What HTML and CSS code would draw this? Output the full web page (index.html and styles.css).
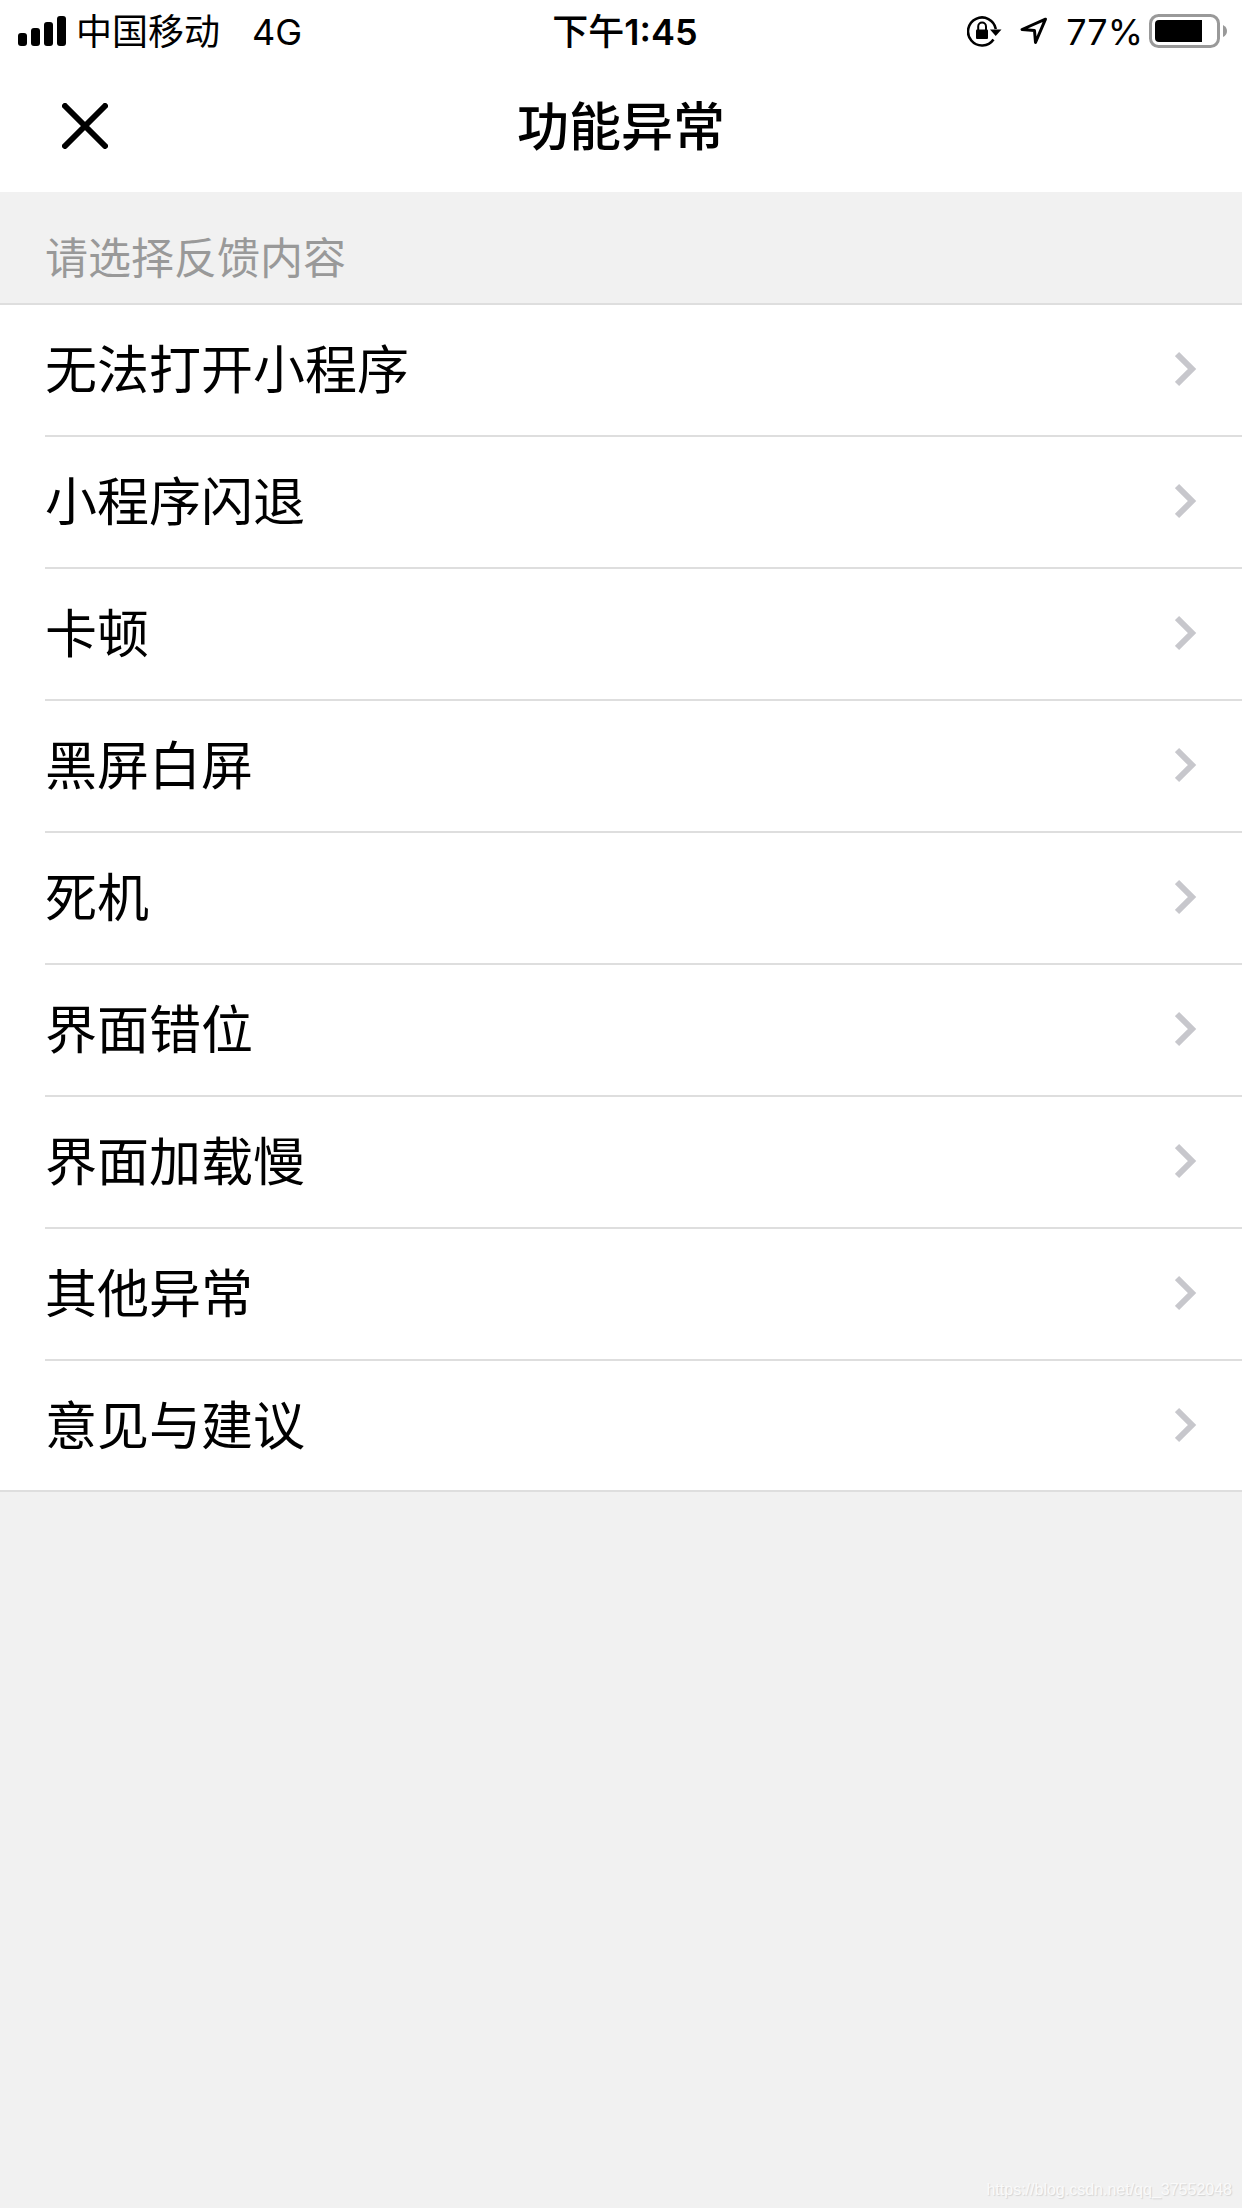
FILE: index.html
```html
<!DOCTYPE html>
<html lang="zh-CN">
<head>
<meta charset="utf-8">
<meta name="viewport" content="width=device-width, initial-scale=1">
<title>功能异常</title>
<link rel="stylesheet" href="styles.css">
</head>
<body>
<div class="status-bar">
  <div class="status-left">
    <svg class="signal" width="48" height="30" viewBox="0 0 48 30" aria-hidden="true"><rect x="0" y="17" width="9" height="13" rx="3"/><rect x="13" y="12" width="9" height="18" rx="3"/><rect x="26" y="6" width="9" height="24" rx="3"/><rect x="39" y="0" width="9" height="30" rx="3"/></svg>
    <span class="status-text">中国移动</span>
    <span class="status-text network">4G</span>
  </div>
  <div class="status-text status-time">下午<span class="digits">1:45</span></div>
  <div class="status-right">
    <svg class="rotation-lock" width="35" height="32" viewBox="0 0 35 32" aria-hidden="true">
      <path d="M26.500 24.500A14 14 0 1 1 28.800 14" fill="none" stroke="#000" stroke-width="2.600"/>
      <path d="M23 14.500h11.500L28.700 21z"/>
      <rect x="9" y="14.500" width="12" height="9.500" rx="1"/>
      <path d="M11.200 15v-3.500a3.900 3.900 0 0 1 7.800 0v3.500" fill="none" stroke="#000" stroke-width="2"/>
    </svg>
    <svg class="location" width="28" height="28" viewBox="0 0 28 28" aria-hidden="true"><path d="M25.500 2.200L2 12.500L14.500 13.500L15.500 25.500z" fill="none" stroke="#000" stroke-width="3" stroke-linejoin="round"/></svg>
    <span class="status-text">77%</span>
    <svg class="battery" width="78" height="34" viewBox="0 0 78 34" aria-hidden="true">
      <rect x="1.500" y="1.500" width="68" height="31" rx="8" fill="none" stroke="#999" stroke-width="3"/>
      <path d="M10 6H53V28H10Q6 28 6 24V10Q6 6 10 6z"/>
      <path d="M74 11Q78 13 78 17T74 23z" fill="#999"/>
    </svg>
  </div>
</div>
<header class="nav-bar">
  <button class="close" type="button" aria-label="关闭"><svg width="46" height="46" viewBox="0 0 46 46" aria-hidden="true"><path d="M3 3L43 43M43 3L3 43" stroke="#000" stroke-width="6" stroke-linecap="round"/></svg></button>
  <h1>功能异常</h1>
</header>
<main>
  <h2 class="section-label">请选择反馈内容</h2>
  <ul class="options">
    <li><a href="#open"><span>无法打开小程序</span><svg class="chevron" width="22" height="36" viewBox="0 0 22 36" aria-hidden="true"><path d="M2 3L17 18L2 33"/></svg></a></li>
    <li><a href="#crash"><span>小程序闪退</span><svg class="chevron" width="22" height="36" viewBox="0 0 22 36" aria-hidden="true"><path d="M2 3L17 18L2 33"/></svg></a></li>
    <li><a href="#lag"><span>卡顿</span><svg class="chevron" width="22" height="36" viewBox="0 0 22 36" aria-hidden="true"><path d="M2 3L17 18L2 33"/></svg></a></li>
    <li><a href="#blank"><span>黑屏白屏</span><svg class="chevron" width="22" height="36" viewBox="0 0 22 36" aria-hidden="true"><path d="M2 3L17 18L2 33"/></svg></a></li>
    <li><a href="#freeze"><span>死机</span><svg class="chevron" width="22" height="36" viewBox="0 0 22 36" aria-hidden="true"><path d="M2 3L17 18L2 33"/></svg></a></li>
    <li><a href="#layout"><span>界面错位</span><svg class="chevron" width="22" height="36" viewBox="0 0 22 36" aria-hidden="true"><path d="M2 3L17 18L2 33"/></svg></a></li>
    <li><a href="#slow"><span>界面加载慢</span><svg class="chevron" width="22" height="36" viewBox="0 0 22 36" aria-hidden="true"><path d="M2 3L17 18L2 33"/></svg></a></li>
    <li><a href="#other"><span>其他异常</span><svg class="chevron" width="22" height="36" viewBox="0 0 22 36" aria-hidden="true"><path d="M2 3L17 18L2 33"/></svg></a></li>
    <li><a href="#suggest"><span>意见与建议</span><svg class="chevron" width="22" height="36" viewBox="0 0 22 36" aria-hidden="true"><path d="M2 3L17 18L2 33"/></svg></a></li>
  </ul>
</main>
<footer class="watermark">https://blog.csdn.net/qq_37552048</footer>
</body>
</html>
```
FILE: styles.css
```css
* {
  box-sizing: border-box;
}

body {
  margin: 0;
  min-height: 100vh;
  display: flex;
  flex-direction: column;
  background: #f1f1f1;
  color: #000;
  font-family: Inter, "Noto Sans CJK SC", sans-serif;
}

.status-bar {
  display: grid;
  grid-template-columns: 1fr auto 1fr;
  align-items: center;
  height: 60px;
  padding: 0 15px 0 18px;
  background: #fff;
  font-size: 36px;
  line-height: 58px;
}

.status-text {
  padding-top: 3px;
}

.status-left,
.status-right {
  display: flex;
  align-items: center;
}

.status-left {
  gap: 10px;
}

.network {
  margin-left: 22px;
}

.status-time {
  padding-left: 5px;
  font-weight: 500;
}

.digits {
  font-weight: 600;
}

.status-right {
  justify-content: flex-end;
}

.location {
  margin: 0 18px;
}

.battery {
  margin-left: 6px;
}

.nav-bar {
  display: grid;
  grid-template-columns: 1fr auto 1fr;
  align-items: center;
  height: 132px;
  padding: 0 62px;
  background: #fff;
}

.close {
  justify-self: start;
  display: flex;
  padding: 0;
  border: 0;
  background: none;
}

h1 {
  margin: 0;
  padding-top: 4px;
  font-size: 52px;
  font-weight: 500;
  line-height: 72px;
}

.section-label {
  margin: 0;
  padding: 36px 45px 15px;
  color: #999;
  font-size: 43px;
  font-weight: 400;
  line-height: 60px;
}

.options {
  margin: 0;
  padding: 0 0 0 45px;
  list-style: none;
  background: #fff;
  border-top: 2px solid #dedede;
  border-bottom: 2px solid #dedede;
}

.options li + li {
  border-top: 2px solid #dedede;
}

.options a {
  display: flex;
  align-items: center;
  justify-content: space-between;
  height: 130px;
  padding: 0 45px 2px 0;
  color: inherit;
  font-size: 52px;
  line-height: 72px;
  text-decoration: none;
}

.options span {
  padding-top: 4px;
}

.options li:last-child a {
  height: 129px;
}

.chevron {
  fill: none;
  stroke: #c7c7cc;
  stroke-width: 6;
}

.watermark {
  margin-top: auto;
  padding: 0 10px 8px;
  color: #fafafa;
  font-family: "Liberation Sans", sans-serif;
  font-size: 16px;
  line-height: 20px;
  text-align: right;
  text-shadow: 1px 1px 1px #d4d4d4;
}
```
